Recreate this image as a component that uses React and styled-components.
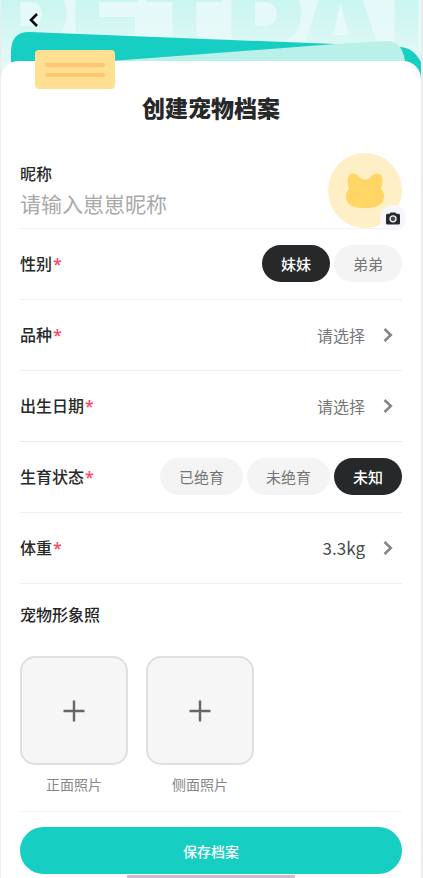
import { useState } from "react"
import styled, { createGlobalStyle } from "styled-components"

const GlobalStyle = createGlobalStyle`
    * {
        box-sizing: border-box;
    }
    body {
        margin: 0;
        background: #fff;
        font-family: "Noto Sans CJK SC", sans-serif;
        color: #262829;
    }
    button, input {
        font-family: inherit;
        color: inherit;
        padding: 0;
        border: 0;
        background: none;
    }
    button {
        cursor: pointer;
    }
`

const Page = styled.div`
    min-height: 100vh;
    border-left: 1px solid #ececec;
    border-right: 2px solid #ececec;
    overflow: hidden;
`

const Header = styled.header`
    position: relative;
    height: 80px;
    overflow: hidden;
    background: linear-gradient(#e4f9f8, #eafaf9);
`

const Wordmark = styled.div`
    position: absolute;
    top: -18px;
    left: -10px;
    font-family: Inter, sans-serif;
    font-size: 120px;
    font-weight: 900;
    line-height: 90px;
    color: transparent;
    background: linear-gradient(#c6f5f0 10px, #dff8f5 70px);
    background-clip: text;
`

const Folders = styled.svg`
    position: absolute;
    top: 0;
    left: 0;
    width: 100%;
    height: 80px;
`

const BackButton = styled.button`
    position: relative;
    display: block;
    margin: 10px 0 0 22px;
    width: 20px;
    height: 20px;

    svg {
        display: block;
        margin: auto;
    }
`

const Sheet = styled.main`
    position: relative;
    margin-top: -19px;
    padding: 0 19px;
    border-radius: 18px 18px 0 0;
    background: #fff;
`

const Note = styled.div`
    position: absolute;
    top: -11px;
    left: 34px;
    width: 80px;
    height: 39px;
    padding: 0 10px;
    border-radius: 4px;
    background: #ffe092;
    display: flex;
    flex-direction: column;
    justify-content: center;
    gap: 6px;
`

const NoteLine = styled.span`
    height: 4px;
    border-radius: 2px;
    background: #ffc673;
`

const Title = styled.h1`
    margin: 0;
    padding: 29px 0;
    font-size: 23px;
    font-weight: 900;
    line-height: 34px;
    text-align: center;
`

const NameRow = styled.div`
    display: flex;
    justify-content: space-between;
    border-bottom: 1px solid #f2f2f3;
`

const NameField = styled.div`
    flex: 1;
    min-width: 0;
    padding-top: 8px;
    display: flex;
    flex-direction: column;
`

const Label = styled.label`
    font-size: 16px;
    font-weight: 500;
    line-height: 24px;
`

const NameInput = styled.input`
    width: 100%;
    height: 36px;
    font-size: 21px;
    outline: none;

    &::placeholder {
        color: #a9a9a9;
    }
`

const Avatar = styled.button`
    position: relative;
    width: 74px;
    height: 75px;
    border-radius: 50%;
    background: #ffefc6;
    display: flex;
    align-items: center;
    justify-content: center;
`

const CameraBadge = styled.span`
    position: absolute;
    right: -4px;
    bottom: -3px;
    width: 26px;
    height: 26px;
    border-radius: 50%;
    background: #f5f7fc;
    display: flex;
    align-items: center;
    justify-content: center;
`

const Row = styled.div`
    display: flex;
    align-items: center;
    justify-content: space-between;
    height: 71px;
    padding-bottom: 1px;
    border-bottom: 1px solid ${props => props.$strong ? "#e6eaea" : "#f0f0f1"};
`

const RowLabel = styled.span`
    display: flex;
    font-size: 16px;
    font-weight: 500;
    line-height: 24px;
`

const Required = styled.span`
    padding: 1px 0 0 1px;
    font-family: "Noto Sans", sans-serif;
    font-size: 16px;
    color: #ff4263;
`

const Chips = styled.div`
    display: flex;
    gap: 4px;
`

const Chip = styled.button`
    height: 37px;
    padding: 0 19px;
    border-radius: 19px;
    font-size: 15px;
    font-weight: ${props => props.$active ? 500 : 400};
    color: ${props => props.$active ? "#fff" : "#747675"};
    background: ${props => props.$active ? "#262829" : "#f4f4f4"};
`

const Picker = styled.button`
    display: flex;
    align-items: center;
    gap: 18px;
    height: 40px;
    padding-right: 9px;
    font-size: ${props => props.$filled ? 17 : 16}px;
    color: ${props => props.$filled ? "#4a4a4a" : "#777"};
`

const Photos = styled.section`
    padding: 18px 0 16px;
    border-bottom: 1px solid #f4f4f5;
`

const SectionTitle = styled.h2`
    margin: 0;
    font-size: 16px;
    font-weight: 500;
    line-height: 24px;
`

const PhotoList = styled.div`
    display: flex;
    gap: 18px;
    padding-top: 30px;
`

const PhotoItem = styled.div`
    display: flex;
    flex-direction: column;
    align-items: center;
    gap: 8px;
    font-size: 14px;
    line-height: 22px;
    color: #868887;
`

const PhotoButton = styled.button`
    width: 108px;
    height: 109px;
    border: 2px solid #dde0e2;
    border-radius: 15px;
    background: #f6f6f6;
    display: flex;
    align-items: center;
    justify-content: center;
`

const SaveButton = styled.button`
    display: block;
    width: 100%;
    height: 47px;
    margin-top: 15px;
    border-radius: 24px;
    background: #16cec2;
    color: #fff;
    font-size: 14px;
    font-weight: 500;
`

const HomeBar = styled.div`
    width: 44%;
    height: 3px;
    margin: 1px auto 0;
    background: #c2c2c2;
`

const Chevron = () => (
    <svg width="10" height="14" viewBox="0 0 10 14" fill="none" stroke="#868682" strokeWidth="2.6">
        <path d="M1.5 1 L7.8 7 L1.5 13" />
    </svg>
)

const Cat = () => (
    <svg width="38" height="35" viewBox="0 0 38 35" fill="#ffd566">
        <path d="M3 16 C1 9 1 3.6 3.6 1.4 C7.4 -1.4 12.4 2.4 14.6 5.2 C16.2 6.8 21.8 6.8 23.4 5.2 C25.6 2.4 30.6 -1.4 34.4 1.4 C37 3.6 37 9 35 16 C37.4 18.6 38 20.6 38 23.4 C38 32 30 35 19 35 C8 35 0 32 0 23.4 C0 20.6 0.6 18.6 3 16 Z" />
    </svg>
)

const Camera = () => (
    <svg width="14" height="13" viewBox="0 0 14 13">
        <path fill="#262829" d="M1.5 1.8 H3.6 L4.6 0.4 H9.4 L10.4 1.8 H12.5 Q14 1.8 14 3.3 V11 Q14 12.5 12.5 12.5 H1.5 Q0 12.5 0 11 V3.3 Q0 1.8 1.5 1.8 Z" />
        <circle cx="7" cy="6.8" r="3" fill="#454748" stroke="#f5f7fc" strokeWidth="1.3" />
    </svg>
)

const Plus = () => (
    <svg width="22" height="22" viewBox="0 0 22 22" stroke="#666" strokeWidth="2.4">
        <path d="M11 0.5 V21.5 M0.5 11 H21.5" />
    </svg>
)

const genders = ["妹妹", "弟弟"]
const statuses = ["已绝育", "未绝育", "未知"]
const photos = ["正面照片", "侧面照片"]

const FieldRow = ({ label, strong, children }) => (
    <Row $strong={strong}>
        <RowLabel>
            {label}
            <Required>*</Required>
        </RowLabel>
        {children}
    </Row>
)

const ChipGroup = ({ label, options, value, onChange }) => (
    <Chips role="group" aria-label={label}>
        {options.map((item) => (
            <Chip
                key={item}
                type="button"
                $active={item === value}
                aria-pressed={item === value}
                onClick={() => onChange(item)}
            >
                {item}
            </Chip>
        ))}
    </Chips>
)

const App = () => {
    const [name, setName] = useState("")
    const [gender, setGender] = useState("妹妹")
    const [status, setStatus] = useState("未知")

    return (
        <Page>
            <GlobalStyle />
            <Header>
                <Wordmark aria-hidden="true">PETPAL</Wordmark>
                <Folders viewBox="0 0 420 80" preserveAspectRatio="none">
                    <path fill="#16cec2" d="M10 80 V52 Q10 32 28 32 L334 44 L398 47 Q412 47 420 62 V80 Z" />
                    <path fill="#b9f0ea" d="M110 61 L334 44 L386 41 Q401 41 404 61 V70 H110 Z" />
                    <path fill="#e4f9f8" d="M0 62 H16 V80 H0 Z" />
                </Folders>
                <BackButton type="button" aria-label="返回">
                    <svg width="9" height="14" viewBox="0 0 9 14" fill="none" stroke="#0c0c0c" strokeWidth="2.6">
                        <path d="M8 1 L2 7 L8 13" />
                    </svg>
                </BackButton>
            </Header>
            <Sheet>
                <Note>
                    <NoteLine />
                    <NoteLine />
                </Note>
                <Title>创建宠物档案</Title>
                <NameRow>
                    <NameField>
                        <Label htmlFor="nickname">昵称</Label>
                        <NameInput
                            id="nickname"
                            placeholder="请输入崽崽昵称"
                            value={name}
                            onChange={(e) => setName(e.target.value)}
                        />
                    </NameField>
                    <Avatar type="button" aria-label="头像">
                        <Cat />
                        <CameraBadge>
                            <Camera />
                        </CameraBadge>
                    </Avatar>
                </NameRow>
                <FieldRow label="性别">
                    <ChipGroup label="性别" options={genders} value={gender} onChange={setGender} />
                </FieldRow>
                <FieldRow label="品种">
                    <Picker type="button" aria-label="品种 请选择">请选择<Chevron /></Picker>
                </FieldRow>
                <FieldRow label="出生日期" strong>
                    <Picker type="button" aria-label="出生日期 请选择">请选择<Chevron /></Picker>
                </FieldRow>
                <FieldRow label="生育状态">
                    <ChipGroup label="生育状态" options={statuses} value={status} onChange={setStatus} />
                </FieldRow>
                <FieldRow label="体重">
                    <Picker type="button" aria-label="体重 3.3kg" $filled>3.3kg<Chevron /></Picker>
                </FieldRow>
                <Photos>
                    <SectionTitle>宠物形象照</SectionTitle>
                    <PhotoList>
                        {photos.map((item) => (
                            <PhotoItem key={item}>
                                <PhotoButton type="button" aria-label={item}>
                                    <Plus />
                                </PhotoButton>
                                {item}
                            </PhotoItem>
                        ))}
                    </PhotoList>
                </Photos>
                <SaveButton type="button">保存档案</SaveButton>
                <HomeBar />
            </Sheet>
        </Page>
    )
}

export default App
